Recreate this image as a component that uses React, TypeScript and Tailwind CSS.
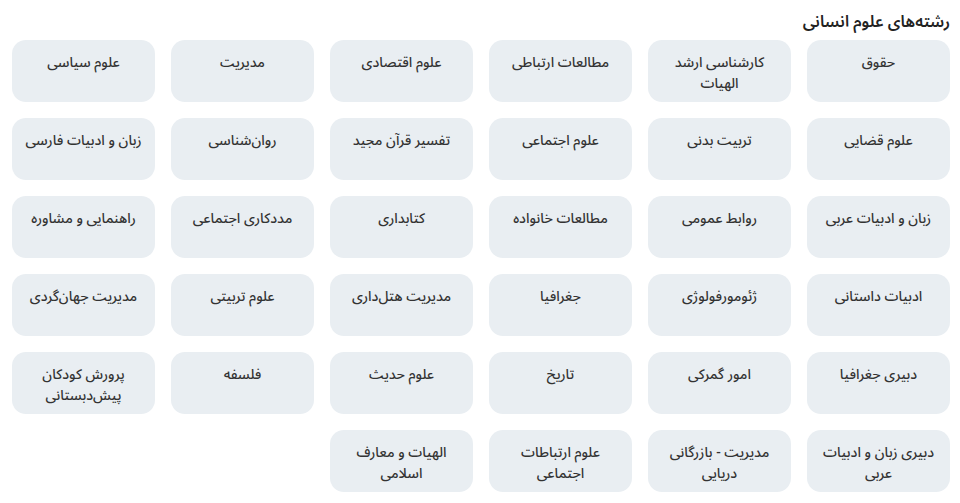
import React from 'react';

const fields: string[] = [
  'حقوق',
  'کارشناسی ارشد\nالهیات',
  'مطالعات ارتباطی',
  'علوم اقتصادی',
  'مدیریت',
  'علوم سیاسی',
  'علوم قضایی',
  'تربیت بدنی',
  'علوم اجتماعی',
  'تفسیر قرآن مجید',
  'روان‌شناسی',
  'زبان و ادبیات فارسی',
  'زبان و ادبیات عربی',
  'روابط عمومی',
  'مطالعات خانواده',
  'کتابداری',
  'مددکاری اجتماعی',
  'راهنمایی و مشاوره',
  'ادبیات داستانی',
  'ژئومورفولوژی',
  'جغرافیا',
  'مدیریت هتل‌داری',
  'علوم تربیتی',
  'مدیریت جهان‌گردی',
  'دبیری جغرافیا',
  'امور گمرکی',
  'تاریخ',
  'علوم حدیث',
  'فلسفه',
  'پرورش کودکان\nپیش‌دبستانی',
  'دبیری زبان و ادبیات\nعربی',
  'مدیریت - بازرگانی\nدریایی',
  'علوم ارتباطات\nاجتماعی',
  'الهیات و معارف\nاسلامی',
];

const App: React.FC = () => {
  return (
    <div
      dir="rtl"
      className="min-h-screen bg-white pl-[12px] pr-[10px] pt-[9px] text-[#333]"
      style={{ fontFamily: '"Noto Sans Arabic", "DejaVu Sans", sans-serif' }}
    >
      <h2 className="mb-[5px] text-[16px] font-semibold leading-[26px] text-[#222]">رشته‌های علوم انسانی</h2>

      <div className="grid grid-cols-6 gap-x-[16px] gap-y-[16px]">
        {fields.map((name) => (
          <div
            key={name}
            className="h-[62px] cursor-pointer whitespace-pre-line rounded-[14px] bg-[#e9eef2] px-2 pt-[12px] text-center text-[14px] font-medium leading-[21px] text-[#333]"
          >
            {name}
          </div>
        ))}
      </div>
    </div>
  );
};

export default App;
